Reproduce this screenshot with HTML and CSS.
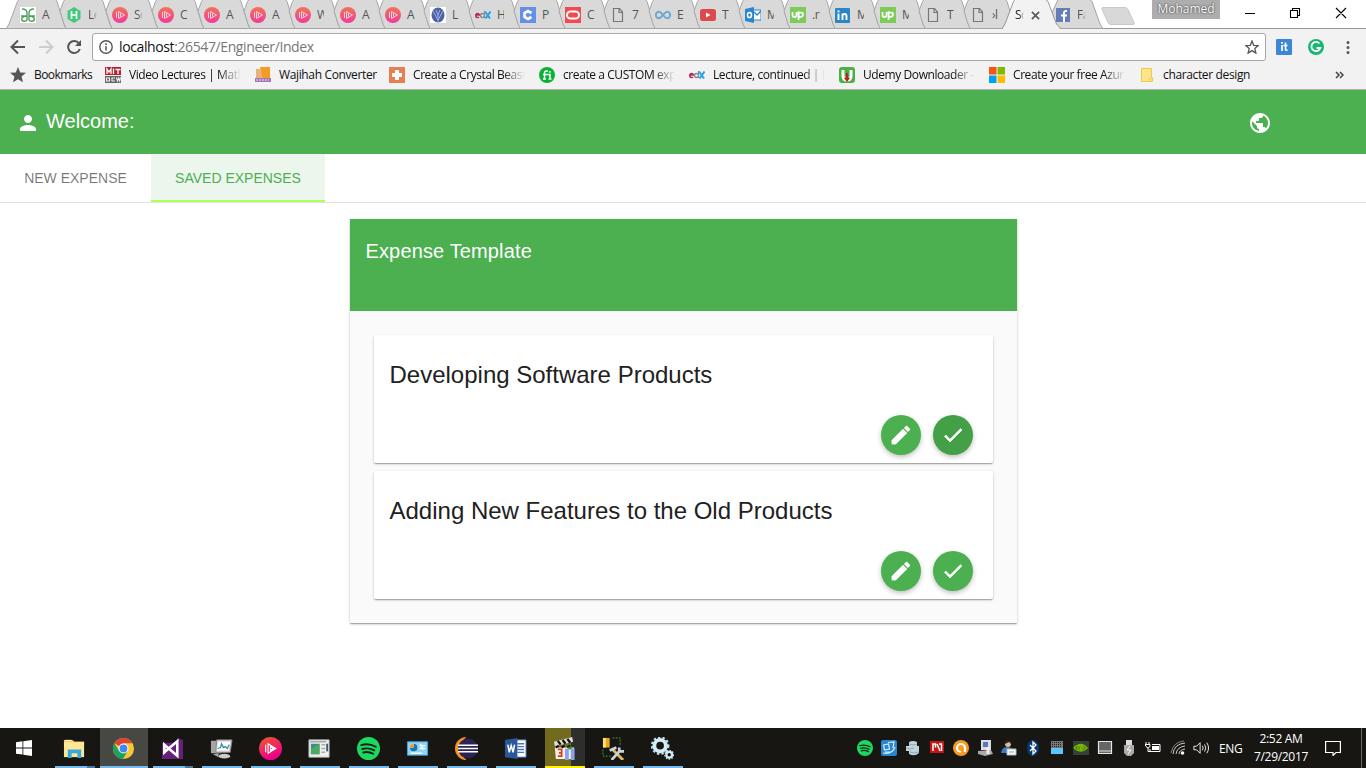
FILE: index.html
```
<!DOCTYPE html>
<html lang="en">
<head>
<meta charset="utf-8">
<title>Expenses</title>
<link rel="stylesheet" href="styles.css">
</head>
<body>
<svg class="defs" width="0" height="0">
  <defs>
    <linearGradient id="pink" x1="0" y1="0" x2="0" y2="1"><stop offset="0" stop-color="#f37355"/><stop offset="1" stop-color="#f03a9c"/></linearGradient>
    <linearGradient id="play" x1="0" y1="0" x2="0.4" y2="1"><stop offset="0" stop-color="#f05a28"/><stop offset="1" stop-color="#ec008c"/></linearGradient>
  </defs>
  <symbol id="tabfirst" viewBox="0 0 60 29"><path d="M.5 28.5 L3 24 11.5 1.5 13 -.5 H49.5 L51 1.500 58 24 60 28.500Z" fill="#d9d9d9" stroke="#a5a5a5"/></symbol>
  <symbol id="tabshape" viewBox="0 0 60 29"><path d="M14 28.500 L12 24 8 11 11.500 1.500 13 -.5 H49.500 L51 1.500 58 24 60 28.500Z" fill="#d9d9d9" stroke="#a5a5a5"/></symbol>
  <symbol id="ps" viewBox="0 0 16 16"><circle cx="8" cy="8" r="8" fill="url(#pink)"/><path d="M4.500 5v6M6.500 4.500v7L12.500 8zM8.500 6.500v3" fill="none" stroke="#fce3ea" stroke-width=".9"/></symbol>
  <symbol id="doc" viewBox="0 0 16 16"><path d="M3.500 1.500h6l3 3.500v9.500h-9zM9 1.500v4h3.500" fill="none" stroke="#777" stroke-width="1.200"/></symbol>
  <symbol id="up" viewBox="0 0 16 16"><path fill="#7dcb58" d="M0 0h16v16H0z"/><path d="M2.500 5v3q0 2 2 2t2-2V5M8.500 13V5l1 0M8.500 8q0-2.500 2.300-2.500T13 7.500t-2.200 2.300T8.500 8" fill="none" stroke="#fff" stroke-width="1.700"/></symbol>
  <symbol id="edx" viewBox="0 0 16 16"><path d="M1 8h3.500A2 2 0 1 0 4 10" fill="none" stroke="#b52b63" stroke-width="1.500"/><circle cx="7.500" cy="8.500" r="2" fill="none" stroke="#888" stroke-width="1.300"/><path d="M9.500 4v7" stroke="#888"/><path d="M10 4.500l5 7M15.500 4.500l-5 7" stroke="#24a2e8" stroke-width="2"/></symbol>
  <symbol id="pencil" viewBox="0 0 24 24"><path fill="#fff" stroke="#fff" stroke-width=".8" d="M3 17.250V21h3.750L17.810 9.940l-3.750-3.750L3 17.250z"/><path fill="#fff" stroke="#fff" stroke-width=".4" d="M20.710 7.040c.39-.39.39-1.020 0-1.410l-2.340-2.340c-.39-.39-1.020-.39-1.410 0l-1.830 1.830 3.750 3.750 1.830-1.830z"/></symbol>
  <symbol id="check" viewBox="0 0 24 24"><path fill="#fff" stroke="#fff" stroke-width=".6" d="M9 16.170L4.830 12l-1.420 1.410L9 19 21 7l-1.410-1.410z"/></symbol>
  <symbol id="spotify" viewBox="0 0 22 22"><circle cx="11" cy="11" r="11" fill="#1ed760"/><path d="M4 7.800q7-2.300 14 1.500M5 11.500q6-1.800 11.500 1.300M6 14.800q5-1.300 9.500 1.200" fill="none" stroke="#16241a" stroke-width="1.800" stroke-linecap="round"/></symbol>
</svg>

<div class="browser">
  <div class="strip">
    <div class="tab wide"><svg class="shape"><use href="#tabfirst"/></svg><svg class="ico" viewBox="0 0 16 16"><path fill="#fff" d="M0 0h16v16H0z"/><path d="M2 2q5 0 5 4v7q-1 2-4 1-2-1-1-3 1-2 5-2H1M14 2q-5 0-5 4v7q1 2 4 1 2-1 1-3-1-2-5-2h6" fill="none" stroke="#4f9e58" stroke-width="1.400"/></svg><span>A</span></div>
    <div class="tab wide"><svg class="shape"><use href="#tabshape"/></svg><svg class="ico" viewBox="0 0 16 16"><path fill="#42c97a" d="M8 0l6.500 4v8L8 16l-6.500-4V4z"/><path d="M5.500 4v8M10.500 4v8M5.500 8h5" stroke="#fff" stroke-width="1.700"/></svg><span class="fade">Le</span></div>
    <div class="tab wide"><svg class="shape"><use href="#tabshape"/></svg><svg class="ico"><use href="#ps"/></svg><span class="fade">So</span></div>
    <div class="tab wide"><svg class="shape"><use href="#tabshape"/></svg><svg class="ico"><use href="#ps"/></svg><span>C</span></div>
    <div class="tab wide"><svg class="shape"><use href="#tabshape"/></svg><svg class="ico"><use href="#ps"/></svg><span>A</span></div>
    <div class="tab"><svg class="shape"><use href="#tabshape"/></svg><svg class="ico"><use href="#ps"/></svg><span>A</span></div>
    <div class="tab"><svg class="shape"><use href="#tabshape"/></svg><svg class="ico"><use href="#ps"/></svg><span class="cut">W</span></div>
    <div class="tab"><svg class="shape"><use href="#tabshape"/></svg><svg class="ico"><use href="#ps"/></svg><span>A</span></div>
    <div class="tab"><svg class="shape"><use href="#tabshape"/></svg><svg class="ico"><use href="#ps"/></svg><span>A</span></div>
    <div class="tab"><svg class="shape"><use href="#tabshape"/></svg><svg class="ico" viewBox="0 0 16 16"><path fill="#fff" d="M0 0h16v16H0z"/><ellipse cx="8" cy="8" rx="6.500" ry="7.500" fill="#4b62aa"/><path d="M3 4l5 9 5-9M6 3l2 5 2-5M8 8v7" fill="none" stroke="#a5b1cd"/></svg><span>L</span></div>
    <div class="tab"><svg class="shape"><use href="#tabshape"/></svg><svg class="ico"><use href="#edx"/></svg><span class="cut">H</span></div>
    <div class="tab"><svg class="shape"><use href="#tabshape"/></svg><svg class="ico" viewBox="0 0 16 16"><path fill="#6490e8" d="M0 0h16v16H0z"/><path d="M11.500 6L8 4 4.500 6v4L8 12l3.500-2" fill="none" stroke="#fff" stroke-width="2.600"/></svg><span>P</span></div>
    <div class="tab"><svg class="shape"><use href="#tabshape"/></svg><svg class="ico" viewBox="0 0 16 16"><path fill="#f34950" d="M0 0h16v16H0z"/><rect x="2" y="4.500" width="12" height="7" rx="3.500" fill="none" stroke="#fff" stroke-width="2"/></svg><span>C</span></div>
    <div class="tab"><svg class="shape"><use href="#tabshape"/></svg><svg class="ico"><use href="#doc"/></svg><span>7</span></div>
    <div class="tab"><svg class="shape"><use href="#tabshape"/></svg><svg class="ico" viewBox="0 0 16 16"><path d="M8 8C6 5 5 4.800 4 4.800a3.200 3.200 0 0 0 0 6.400C6 11.200 10 4.800 12 4.800a3.200 3.200 0 0 1 0 6.400C11 11.200 10 10.500 8 8" fill="none" stroke="#6ea8d2" stroke-width="2"/></svg><span>E</span></div>
    <div class="tab"><svg class="shape"><use href="#tabshape"/></svg><svg class="ico" viewBox="0 0 16 16"><rect y="2" width="16" height="12" rx="2.500" fill="#dd4a4e"/><path d="M6 5.500v5L10.500 8z" fill="#fff"/></svg><span>T</span></div>
    <div class="tab"><svg class="shape"><use href="#tabshape"/></svg><svg class="ico" viewBox="0 0 16 16"><path d="M8 3h8v10H8z" fill="#fff" stroke="#2b86cc"/><path d="M9 5l3 3 4-4" fill="none" stroke="#2b86cc" stroke-width="1.300"/><path fill="#2b86cc" d="M0 2l9-2v16l-9-2z"/><ellipse cx="4.500" cy="8" rx="2" ry="2.600" fill="none" stroke="#fff" stroke-width="1.500"/></svg><span class="cut">M</span></div>
    <div class="tab"><svg class="shape"><use href="#tabshape"/></svg><svg class="ico"><use href="#up"/></svg><span>.r</span></div>
    <div class="tab"><svg class="shape"><use href="#tabshape"/></svg><svg class="ico" viewBox="0 0 16 16"><rect y="1" width="15" height="15" rx="1" fill="#2b86c5"/><path d="M3.500 6.500V13M3.500 3.500v1.800M7.500 13V6.500M7.500 9q0-2 2-2t2 2v4" fill="none" stroke="#fff" stroke-width="1.900"/></svg><span class="cut">M</span></div>
    <div class="tab"><svg class="shape"><use href="#tabshape"/></svg><svg class="ico"><use href="#up"/></svg><span class="cut">M</span></div>
    <div class="tab"><svg class="shape"><use href="#tabshape"/></svg><svg class="ico"><use href="#doc"/></svg><span>T</span></div>
    <div class="tab"><svg class="shape"><use href="#tabshape"/></svg><svg class="ico"><use href="#doc"/></svg><span>›l</span></div>
    <div class="tab active"><svg class="shape" viewBox="0 0 60 30"><path d="M0 30L3 25 11.500 1.500 13-.5H44L46 1.500 54 24 59 30z" fill="#f2f2f2"/><path d="M0 28.500L3 24 11.500 1.500 13-.5M43.500-.5L46 1.500 54.500 24 59 28.500" fill="none" stroke="#999"/></svg><span class="fade">So</span><svg class="x" viewBox="0 0 10 10"><path d="M1 1l8 8M9 1L1 9" stroke="#555" stroke-width="1.700"/></svg></div>
    <div class="tab face"><svg class="shape" viewBox="0 0 60 29"><path d="M8 28.500L6 24 2 15 7 4 9-.5H41L43 1.500 51 24 54 28.500z" fill="#d9d9d9" stroke="#a5a5a5"/></svg><svg class="ico" viewBox="0 0 16 16"><path d="M1 1h14v14H1z" fill="#657db5"/><path d="M9 15V6q0-2.500 3-2M6 8.500h6" fill="none" stroke="#fff" stroke-width="2"/></svg><span class="fade">Fa</span></div>
    <svg class="newtab" viewBox="0 0 36 19"><path d="M3 .5h22q2 0 3 2l6 13q1 2-1 2H11q-2 0-3-2l-6-13q-1-2 1-2z" fill="#d8d8d8" stroke="#c8c8c8"/></svg>
    <div class="user">Mohamed</div>
    <svg class="winbtns" width="140" height="28" viewBox="0 0 140 28"><path d="M19 13.500h10M64.500 10.500h7v7h-7zM66.500 10.500v-2h7v7h-2M110 8l10 10M120 8l-10 10" fill="none" stroke="#000" stroke-width="1.100"/></svg>
  </div>
  <div class="toolbar">
    <svg class="nav" width="84" height="30" viewBox="0 0 84 30"><path d="M25 15H12M18 8.500L11.500 15 18 21.500" fill="none" stroke="#555" stroke-width="2"/><path d="M39 15h13M46 8.500l6.500 6.500-6.500 6.500" fill="none" stroke="#ccc" stroke-width="2"/><path d="M79 11.500A6 6 0 1 0 79.800 17" fill="none" stroke="#555" stroke-width="2"/><path d="M81 8v6h-6z" fill="#555"/></svg>
    <div class="omni">
      <svg width="14" height="14" viewBox="0 0 14 14"><circle cx="7" cy="7" r="6.200" fill="none" stroke="#555" stroke-width="1.400"/><path d="M7 6.200v4.300M7 3.300v1.700" stroke="#555" stroke-width="1.600"/></svg>
      <span class="url">localhost<i>:26547/Engineer/Index</i></span>
      <svg width="14" height="14" viewBox="0 0 14 14"><path d="M7 1l1.700 4.300 4.600.3-3.500 3 1.100 4.500L7 10.600l-3.900 2.500 1.100-4.500-3.500-3 4.600-.3z" fill="none" stroke="#555" stroke-width="1.300"/></svg>
    </div>
    <svg class="ext" width="84" height="20" viewBox="0 0 84 20"><rect x="1" y="2" width="16" height="16" rx="1" fill="#3b86d6"/><path d="M7 8v6M7 5v1.700M10.500 5.500V12q0 1.500 2 1.200M8.500 8.500h4" stroke="#fff" fill="none" stroke-width="1.700"/><circle cx="41" cy="10" r="8" fill="#1cb674"/><path d="M44.500 6.500a4.600 4.600 0 1 0 .9 4.500H41.500" fill="none" stroke="#fff" stroke-width="1.800"/><path d="M73 5.500h0M73 10.500h0M73 15.500h0" stroke="#555" stroke-width="3" stroke-linecap="round"/></svg>
  </div>
  <div class="marks">
    <div class="mark"><svg viewBox="0 0 16 16"><path d="M8 0l2.200 5.400 5.800.4-4.500 3.700L13 15.300 8 12.200l-5 3.100 1.500-5.800L0 5.800l5.800-.4z" fill="#555"/></svg><span class="w57">Bookmarks</span></div>
    <div class="mark"><svg viewBox="0 0 16 16"><path fill="#b5222e" d="M0 0h16v8H0z"/><path fill="#666" d="M0 9h16v7H0z"/><path d="M2 7V2l2 3 2-3v5M8.500 1.500V7M10.500 2.500h5M13 2v5" fill="none" stroke="#fff" stroke-width="1.300"/><path d="M1.500 11h3v3h-3zM10 11H7v3h3M11.500 10.500l1 3.500 1.200-3 1 3 .8-3.500" fill="none" stroke="#eee" stroke-width="1.100"/></svg><span class="fade">Video Lectures | Math</span></div>
    <div class="mark"><svg viewBox="0 0 16 16"><path fill="#f59a23" d="M5 0h10v11H7z"/><path fill="#e8b27c" d="M1 2h4l3 9H1z"/><path fill="#a478b5" d="M0 11h16v4H0z"/><path d="M1 13h13" stroke="#eadcf0" stroke-dasharray="2 1"/></svg><span class="w96">Wajihah Converter</span></div>
    <div class="mark"><svg viewBox="0 0 16 16"><path fill="#e77f50" d="M0 0h16v16H0z"/><path d="M8 3v10M3 8h10" stroke="#fff" stroke-width="4"/></svg><span class="fade">Create a Crystal Beast</span></div>
    <div class="mark"><svg viewBox="0 0 16 16"><circle cx="8" cy="8" r="8" fill="#09b235"/><path d="M5.500 12V6q0-2 2-2H9M4 7.500h7V12M11 4v1.800M4 12h3M9.500 12h3" fill="none" stroke="#fff" stroke-width="1.500"/></svg><span class="fade">create a CUSTOM exp</span></div>
    <div class="mark"><svg><use href="#edx"/></svg><span class="fade">Lecture, continued | L</span></div>
    <div class="mark"><svg viewBox="0 0 16 16"><rect width="16" height="16" rx="3" fill="#4caf45"/><path d="M4 3v6q0 4 4 4t4-4V3" fill="none" stroke="#fff" stroke-width="3"/><path d="M7 6h2v5h2l-3 4-3-4h2z" fill="#c51c22"/></svg><span class="fade">Udemy Downloader -</span></div>
    <div class="mark"><svg viewBox="0 0 16 16"><path fill="#f65314" d="M0 0h7.500v7.500H0z"/><path fill="#7cbb00" d="M8.500 0H16v7.500H8.500z"/><path fill="#00a1f1" d="M0 8.500h7.500V16H0z"/><path fill="#ffbb00" d="M8.500 8.500H16V16H8.500z"/></svg><span class="fade">Create your free Azur</span></div>
    <div class="mark"><svg viewBox="0 0 16 16"><path fill="#ffe48c" stroke="#edc94e" d="M.5 1.500h10v9h1v4H.5zM9 14v-3h2"/></svg><span class="folder">character design</span></div>
    <svg class="more" width="9" height="8" viewBox="0 0 9 8"><path d="M1 1l3 3-3 3M5 1l3 3-3 3" fill="none" stroke="#444" stroke-width="1.500"/></svg>
  </div>
</div>

<main class="app">
  <header class="appbar">
    <svg width="24" height="24" viewBox="0 0 24 24"><path fill="#fff" d="M12 12c2.210 0 4-1.790 4-4s-1.790-4-4-4-4 1.790-4 4 1.790 4 4 4zm0 2c-2.670 0-8 1.340-8 4v2h16v-2c0-2.660-5.330-4-8-4z"/></svg>
    <h1>Welcome:</h1>
    <svg class="globe" width="24" height="24" viewBox="0 0 24 24"><path fill="#fff" d="M12 2C6.480 2 2 6.480 2 12s4.480 10 10 10 10-4.480 10-10S17.520 2 12 2zm-1 17.930c-3.950-.49-7-3.850-7-7.930 0-.62.080-1.210.21-1.790L9 15v1c0 1.100.9 2 2 2v1.930zm6.900-2.540c-.26-.81-1-1.390-1.900-1.390h-1v-3c0-.55-.45-1-1-1H8v-2h2c.55 0 1-.45 1-1V7h2c1.100 0 2-.9 2-2v-.41c2.930 1.190 5 4.060 5 7.410 0 2.080-.8 3.970-2.100 5.390z"/></svg>
  </header>
  <nav class="tabs"><a>New Expense</a><a class="on">Saved Expenses</a></nav>
  <section class="panel">
    <h2>Expense Template</h2>
    <div class="list">
      <article class="card"><h3>Developing Software Products</h3><div class="actions"><button class="fab"><svg><use href="#pencil"/></svg></button><button class="fab hover"><svg><use href="#check"/></svg></button></div></article>
      <article class="card"><h3>Adding New Features to the Old Products</h3><div class="actions"><button class="fab"><svg><use href="#pencil"/></svg></button><button class="fab"><svg><use href="#check"/></svg></button></div></article>
    </div>
  </section>
</main>

<footer class="taskbar">
  <div class="start"><svg width="16" height="16" viewBox="0 0 16 16"><path fill="#fff" d="M0 2.200L6.500 1.300v6.200H0zM7.300 1.200L16 0v7.500H7.300zM0 8.400h6.500v6.200L0 13.700zM7.300 8.400H16V16l-8.700-1.200z"/></svg></div>
  <div class="task more-win"><svg viewBox="0 0 24 24"><path fill="#f3c34e" d="M1 3h9l2 2h10v3H1z"/><path fill="#ffe694" d="M1 5h21v16H1z"/><path fill="#33a9e2" d="M5 13h14v9h-4v-5H9v5H5z"/><path d="M2 3.500h7" stroke="#fff"/></svg></div>
  <div class="task current"><svg viewBox="0 0 24 24"><circle cx="12" cy="12" r="11" fill="#f7c92f"/><path d="M12 12L2.500 6.500A11 11 0 0 1 21.500 6.500H12z" fill="#db4437"/><path d="M2.500 6.500A11 11 0 0 0 11.500 23L16.500 14 12 12 7 14z" fill="#1ba160"/><circle cx="12" cy="12" r="5.200" fill="#fff"/><circle cx="12" cy="12" r="4.100" fill="#4285f4"/></svg></div>
  <div class="task more-win"><svg viewBox="0 0 24 24"><path fill="#68217a" d="M1 6h16V1l6 2v20H1z"/><path d="M3.500 8l4.500 4-4.500 4zM8 12l9-7.500v15L8 12z" fill="none" stroke="#fff" stroke-width="2.700"/></svg></div>
  <div class="task"><svg viewBox="0 0 24 24"><path fill="#a5a5a5" d="M1 4h11v13H1zM3 18l6-1v4z"/><path fill="#d8d8d8" stroke="#888" d="M7 3h16l-2 13H6z"/><path fill="#fff" d="M8.500 5H21l-1.500 9h-12z"/><path d="M8 12l3-1 1-4 2 4 2-1 2 2 2-4" fill="none" stroke="#3187aa" stroke-width="1.300"/><ellipse cx="15" cy="20" rx="6" ry="2.500" fill="#ccc"/></svg></div>
  <div class="task"><svg viewBox="0 0 24 24"><circle cx="12" cy="12" r="12" fill="url(#play)"/><path d="M7 8v8M9.500 7v10l8-5zM12 10v4l3-2z" fill="none" stroke="#fff" stroke-width="1.200"/></svg></div>
  <div class="task"><svg viewBox="0 0 24 24"><path fill="#eef0ef" stroke="#bbb" d="M1 3h21v18H1z"/><path fill="#3d8f8b" d="M3 7h9v11H3z"/><path fill="#4daa60" d="M3 13l9-6v11H3z"/><path d="M14 8h4M14 12h4M14 16h4M2 5h17" stroke="#aaa" stroke-width="1.500"/><path fill="#2f6480" d="M19 7h2v8h-2z"/></svg></div>
  <div class="task"><svg><use href="#spotify"/></svg></div>
  <div class="task"><svg viewBox="0 0 24 24"><path fill="#8fd4f5" stroke="#46a1d5" d="M1.500 5h21v14h-21z"/><circle cx="8" cy="11" r="4" fill="#fff"/><path d="M8 11V7a4 4 0 1 1-4 4z" fill="#1975b8"/><path d="M8 11H4a4 4 0 0 1 4-4z" fill="#f29a20"/><path d="M14 9h6M14 12h6M15 7l3 6M5 17h12" stroke="#fff" stroke-width="1.500"/></svg></div>
  <div class="task"><svg viewBox="0 0 24 24"><path d="M12 0A12 12 0 0 0 12 24A15 15 0 0 1 12 0" fill="#f7941e"/><circle cx="13.500" cy="12" r="10.500" fill="#2c2255"/><path d="M3 8.500h21M3 12h21M3 15.500h21" stroke="#fff" stroke-width="1.600"/></svg></div>
  <div class="task"><svg viewBox="0 0 24 24"><path fill="#fff" stroke="#4774b5" d="M12 3h11v18H12z"/><path d="M14 7h7M14 10h7M14 13h7M14 16h7" stroke="#4774b5" stroke-width="1.400"/><path fill="#2b579a" d="M1 3l13-2v22L1 21z"/><path d="M4 8l1.500 8L7.500 9l2 7L11 8" fill="none" stroke="#fff" stroke-width="1.600"/></svg></div>
  <div class="task alert"><svg viewBox="0 0 24 24"><path fill="#f5f3ec" d="M2 11h20v12H3z"/><path fill="#ddd" d="M1 5l19-5 1 5L2 10z"/><path d="M5 4l3 4M10 3l3 4M15 2l3 4M3 11l3-2M9 11l3-2M15 11l3-2" stroke="#111" stroke-width="2.400"/><path d="M5 13h4v7H5M6 16.500h3" fill="none" stroke="#d63b24" stroke-width="1.800"/><path d="M18 10v3" stroke="#279237" stroke-width="4"/><path d="M14.500 12v12M20.500 12v12" stroke="#8da2e6" stroke-width="4"/></svg></div>
  <div class="task"><svg viewBox="0 0 24 24"><path fill="#e7a81d" d="M1 1h7v10H1z"/><path fill="#ffdf75" d="M1 1h3v10H1z"/><path d="M11 1h8v8M1 13v7h8" fill="none" stroke="#3d9c35" stroke-dasharray="2 1.300"/><path d="M10 12l12 12" stroke="#e3b755" stroke-width="3"/><path d="M10 24l9-10M8 14l7-3M18 11v4h5" fill="none" stroke="#c7d3dd" stroke-width="2.800"/></svg></div>
  <div class="task"><svg viewBox="0 0 24 24"><circle cx="9.500" cy="9" r="6" fill="none" stroke="#d5ebf5" stroke-width="4"/><circle cx="9.500" cy="9" r="8.500" fill="none" stroke="#c1deed" stroke-width="2.500" stroke-dasharray="2.500 2.200"/><circle cx="19" cy="18.500" r="3" fill="none" stroke="#d5ebf5" stroke-width="2.400"/><circle cx="19" cy="18.500" r="4.500" fill="none" stroke="#c1deed" stroke-width="1.500" stroke-dasharray="1.500 1.500"/></svg></div>

  <div class="tray">
    <svg><use href="#spotify"/></svg>
    <svg viewBox="0 0 16 16"><rect width="16" height="16" rx="2" fill="#2687cf"/><path d="M2.500 5l5-1 1 5-5 1zM7 2.500l6-.5-1 6M2 13q9 2 12-6M4 12h6" fill="none" stroke="#d8efff" stroke-width="1.200"/></svg>
    <svg viewBox="0 0 16 16"><path d="M4 2q4-2 8 0v4h2v7q-4 4-10 1v-3H1V6h3z" fill="#c2d3dc"/><path d="M4 4q4 2 8 0M1 8q4 2 8 0M5 12q4 2 9 0" fill="none" stroke="#8ca7b5"/></svg>
    <svg viewBox="0 0 16 16"><path fill="#c71414" d="M1 1h14v12H1z"/><path d="M4 11V4h2.500v3.500M8 4l3 7M12.500 11V4H10" fill="none" stroke="#fff" stroke-width="1.500"/></svg>
    <svg viewBox="0 0 16 16"><circle cx="8" cy="8" r="8" fill="#f79a1f"/><path d="M12 12V8a4 4 0 1 0-4 4" fill="none" stroke="#fff" stroke-width="2.200"/></svg>
    <svg viewBox="0 0 16 16"><path fill="#ddd" d="M4 0h10v10H4z"/><path fill="#5a76be" d="M6 2h5v5H6z"/><path fill="#aaa" d="M1 11l13-1 2 4-8 2-7-2z"/><path d="M11 7v7" stroke="#eee" stroke-width="3"/></svg>
    <svg viewBox="0 0 16 16"><circle cx="7" cy="4" r="3" fill="#e5b98d"/><path d="M4 4q0-4 3-4t3 4l-2-2z" fill="#222"/><path fill="#3b7ac6" d="M0 13q1-7 7-6 5 0 5 6z"/><path fill="#fff" stroke="#a8b9c9" d="M6 9h9v6H6z"/><path d="M8 12h5" stroke="#999"/></svg>
    <svg viewBox="0 0 16 16"><ellipse cx="8" cy="8" rx="6" ry="8" fill="#073773"/><path d="M5 5l6 6-3 3V2l3 3-6 6" fill="none" stroke="#fff" stroke-width="1.300"/></svg>
    <svg viewBox="0 0 16 16"><path fill="#777" d="M2 1h12v7H2z"/><path d="M3 2.500h10M3 4.500h10M3 6.500h10" stroke="#222" stroke-dasharray="1 1"/><path fill="#5cc3ff" d="M2 8h12v6H2z"/></svg>
    <svg viewBox="0 0 16 16"><path fill="#344137" d="M0 1h16v14H0z"/><path d="M1 8q7-7 13 0-6 6-13 0M4 8q4-4 7 0-3 3-7 0" fill="none" stroke="#77b900" stroke-width="1.500"/><circle cx="8" cy="8" r="1.500" fill="#77b900"/></svg>
    <svg viewBox="0 0 16 16"><path fill="#666" stroke="#dce7f2" stroke-width="1.200" d="M1.500 1.500h13v12h-13z"/><path d="M2 11h12" stroke="#ddd"/></svg>
    <svg viewBox="0 0 16 16"><path fill="#ddd" d="M5 0h6v5H5z"/><path fill="#aaa" d="M3 5h10v8l-3 3H6l-3-3z"/><path d="M9 6l-3 4h4l-3 4" fill="none" stroke="#fff"/></svg>
    <svg viewBox="0 0 16 16"><path d="M7 4.500h8v7H5V9M1 2v2M4 2v2M0 4.500h5v2L3 8 1 6.500zM3 8v3.500h2" fill="none" stroke="#fff"/><path fill="#fff" d="M7 6h7v4H7z"/></svg>
    <svg class="wifi" viewBox="0 0 16 16"><path d="M3 14Q4 4 15 3M6 14Q7 7 15 6M9 14q0-4 6-5" fill="none" stroke="#ccc"/><path d="M1 13Q3 2 14 1" fill="none" stroke="#999" stroke-width=".8"/><circle cx="12.500" cy="13" r="1.800" fill="#fff"/></svg>
    <svg viewBox="0 0 18 16"><path d="M1 6h3l4-4v12l-4-4H1zM10.500 5.500q2 2.500 0 5M13 4q3 4 0 8M15.500 2q4 6 0 12" fill="none" stroke="#fff"/></svg>
  </div>
  <span class="lang">ENG</span>
  <div class="clock"><span>2:52 AM</span><span>7/29/2017</span></div>
  <svg class="note" width="16" height="16" viewBox="0 0 16 16"><path d="M.6 1.500h14.800v11H11l-3 3v-3H.6z" fill="none" stroke="#fff" stroke-width="1.200"/></svg>
  <i class="edge"></i>
</footer>
</body>
</html>
```
FILE: styles.css
```
* { box-sizing: border-box; }
body { margin: 0; width: 1366px; height: 768px; overflow: hidden; display: flex; flex-direction: column; background: #fff; font-family: "Liberation Sans", Arial, sans-serif; }
.defs { position: absolute; }
svg { display: block; flex: none; }

.browser { height: 90px; flex: none; background: #f2f2f2; border-bottom: 1px solid #b3b3b3; font: 12px "Open Sans", "Noto Sans", sans-serif; color: #222; }
.strip { position: relative; height: 29px; padding-left: 20px; display: flex; background: #fff; border-bottom: 1px solid #999; isolation: isolate; }
.tab { position: relative; width: 45px; height: 29px; flex: none; display: flex; align-items: center; gap: 6px; color: #555; }
.tab.wide { width: 46px; }
.tab .shape { position: absolute; left: -14px; top: 0; width: 60px; height: 29px; z-index: -1; }
.tab .ico { width: 16px; height: 16px; z-index: 1; }
.tab span { z-index: 1; width: 9px; white-space: nowrap; line-height: 18px; letter-spacing: -.5px; }
.tab .cut { width: 7px; overflow: hidden; }
.tab.active { width: 90px; height: 30px; z-index: 2; color: #222; gap: 7px; padding-left: 45px; margin-left: -45px; }
.tab.active .shape { left: 32px; height: 30px; }
.tab.active .x { width: 9px; height: 9px; }
.tab.face { width: 42px; margin-left: -5px; }
.tab.face .shape { left: -6px; }
.fade { -webkit-mask-image: linear-gradient(90deg, #000 calc(100% - 22px), transparent); mask-image: linear-gradient(90deg, #000 calc(100% - 22px), transparent); }
.tab .fade { -webkit-mask-image: linear-gradient(90deg, #000 50%, transparent); mask-image: linear-gradient(90deg, #000 50%, transparent); }
.newtab { width: 36px; height: 19px; margin: 7px 0 0 3px; }
.user { margin-left: auto; width: 68px; height: 19px; background: #adadad; color: #fff; text-align: center; line-height: 18px; text-shadow: 0 0 2px #333, 0 0 1px #555; }
.winbtns { margin-left: 6px; }

.toolbar { height: 33px; display: flex; align-items: center; padding: 3px 0 0; }
.nav { margin-right: 8px; }
.omni { width: 1174px; height: 28px; border: 1px solid #a6a6a6; border-radius: 3px; background: #fff; display: flex; align-items: center; padding: 0 6px; gap: 6px; }
.url { flex: 1; font-size: 14px; letter-spacing: -.39px; color: #111; line-height: 20px; }
.url i { font-style: normal; color: #777; }
.ext { margin-left: 9px; }
.marks { height: 26px; display: flex; align-items: center; gap: 14px; padding: 0 0 0 10px; }
.mark { display: flex; align-items: center; gap: 8px; }
.mark svg { width: 16px; height: 16px; }
.mark span { width: 112px; white-space: nowrap; letter-spacing: -.36px; line-height: 18px; color: #111; }
.mark .fade { letter-spacing: -.42px; }
.mark .w57 { width: 57px; letter-spacing: -.55px; }
.mark .w96 { width: 96px; }
.mark .folder { width: 88px; margin-left: -2px; }
.mark:nth-child(9) { margin-left: 2px; }
.more { margin: 0 22px 0 auto; }

.app { flex: 1; }
.appbar { height: 64px; background: #4caf50; color: #fff; display: flex; align-items: center; padding: 2px 94px 0 16px; }
.appbar h1 { margin: 0 auto 0 6px; font-size: 20px; font-weight: 400; line-height: 24px; padding-bottom: 4px; }
.tabs { height: 49px; display: flex; border-bottom: 1px solid #e0e0e0; }
.tabs a { width: 151px; text-align: center; font-size: 14px; line-height: 48px; text-transform: uppercase; color: rgba(0,0,0,.54); }
.tabs .on { width: 174px; height: 48px; color: #4caf50; background: #edf6ed; border-bottom: 2px solid #b2ff59; }
.panel { width: 667px; height: 404px; margin: 16px 0 0 350px; background: #fafafa; box-shadow: 0 1px 3px rgba(0,0,0,.2), 0 1px 1px rgba(0,0,0,.14), 0 2px 1px -1px rgba(0,0,0,.12); }
.panel h2 { margin: 0; height: 92px; padding: 20px 15.5px; background: #4caf50; color: #fff; font-size: 20px; line-height: 24px; font-weight: 400; letter-spacing: .14px; }
.list { padding: 24px; display: flex; flex-direction: column; gap: 8px; }
.card { height: 128px; background: #fff; border-radius: 2px; padding: 24px 20px 8px 15.5px; display: flex; flex-direction: column; justify-content: space-between; box-shadow: 0 1px 3px rgba(0,0,0,.2), 0 1px 1px rgba(0,0,0,.14), 0 2px 1px -1px rgba(0,0,0,.12); }
.card h3 { margin: 0; font-size: 24px; line-height: 32px; font-weight: 400; color: #212121; }
.actions { display: flex; justify-content: flex-end; gap: 12px; }
.fab { width: 40px; height: 40px; padding: 8px; border: 0; border-radius: 50%; background: #4caf50; box-shadow: 0 2px 5px rgba(0,0,0,.26); }
.fab.hover { background: #43a047; }
.fab svg { width: 24px; height: 24px; margin-left: -.5px; }

.taskbar { height: 40px; flex: none; background: #171612; color: #fff; display: flex; align-items: center; font: 12px "Open Sans", "Noto Sans", sans-serif; letter-spacing: -.3px; }
.start { width: 50px; display: flex; padding-left: 16px; }
.task { width: 49px; height: 40px; display: flex; align-items: center; justify-content: center; background: linear-gradient(#76b9ed, #76b9ed) 5px 38px / 40px 2px no-repeat; }
.task svg { width: 23px; height: 23px; }
.task.more-win { background: linear-gradient(90deg, #76b9ed 80%, #4c7899 80%) 5px 38px / 40px 2px no-repeat; }
.task.current { background: linear-gradient(#76b9ed, #76b9ed) 1px 38px / 48px 2px no-repeat, linear-gradient(#474744, #474744) 1px 0 / 48px 38px no-repeat; }
.task.alert { background: linear-gradient(#fff100, #fff100) 5px 38px / 40px 2px no-repeat, linear-gradient(90deg, #726b1d 65%, #2e2e2c 65%) 5px 0 / 40px 38px no-repeat; }
.tray { margin-left: auto; display: flex; gap: 8px; }
.tray svg { width: 16px; height: 16px; }
.tray .wifi { margin-left: 1px; margin-right: -1px; }
.lang { width: 24px; margin-left: 10px; }
.clock { width: 60px; margin-left: 8px; display: flex; flex-direction: column; align-items: center; line-height: 18px; white-space: nowrap; }
.note { margin: 0 20px 0 14px; }
.edge { width: 1px; height: 40px; background: #6b6a67; margin-right: 4px; }
```
